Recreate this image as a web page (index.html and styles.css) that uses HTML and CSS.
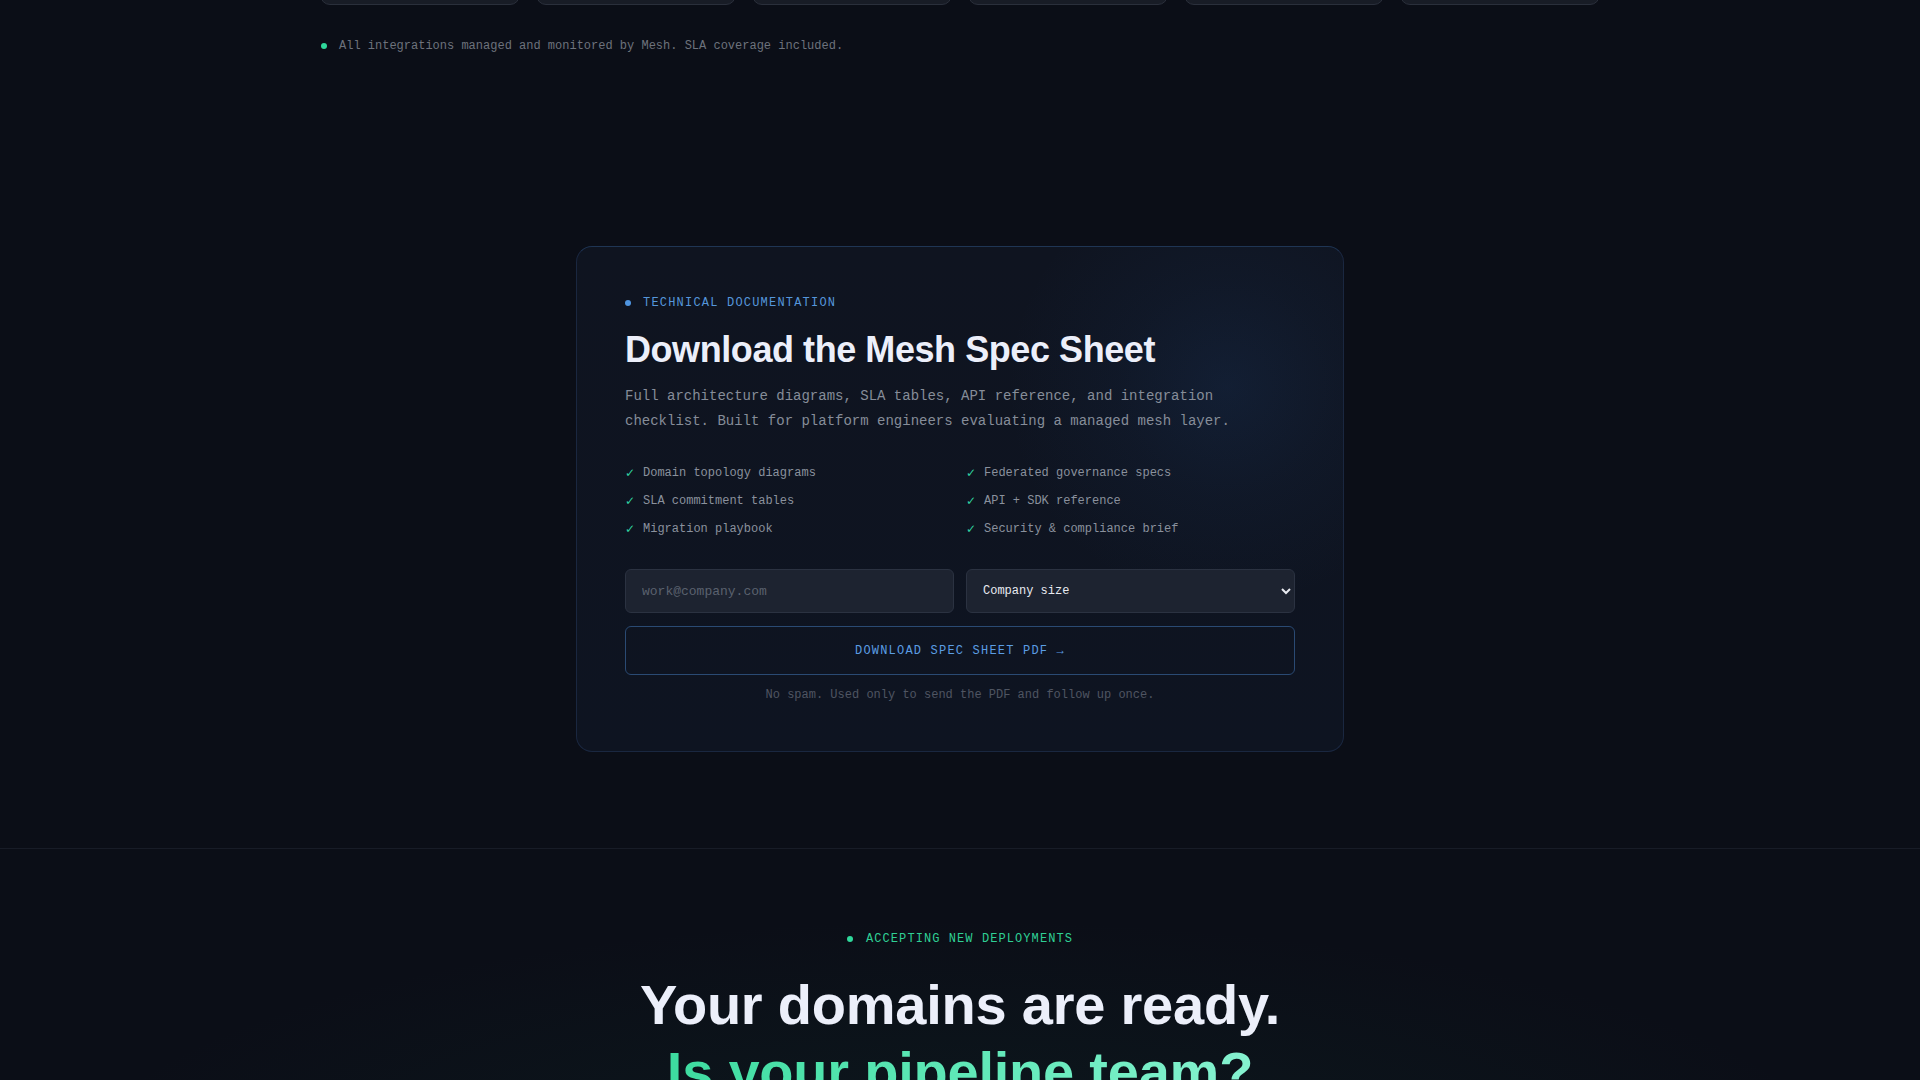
FILE: index.html
```html
<!DOCTYPE html>
<html lang="en">
<head>
<meta charset="utf-8">
<title>Mesh Spec Sheet</title>
<link rel="stylesheet" href="styles.css">
</head>
<body>
<div class="integrations">
  <div class="int-cards">
    <div class="int-card"></div>
    <div class="int-card"></div>
    <div class="int-card"></div>
    <div class="int-card"></div>
    <div class="int-card"></div>
    <div class="int-card"></div>
  </div>
  <p class="int-note"><span class="dot dot-green"></span>All integrations managed and monitored by Mesh. SLA coverage included.</p>
</div>

<section class="spec">
  <div class="spec-card">
    <div class="eyebrow eyebrow-blue"><span class="dot dot-blue"></span>TECHNICAL DOCUMENTATION</div>
    <h2 class="spec-title">Download the Mesh Spec Sheet</h2>
    <p class="spec-desc">Full architecture diagrams, SLA tables, API reference, and integration checklist. Built for platform engineers evaluating a managed mesh layer.</p>
    <ul class="checklist">
      <li><span class="check">✓</span>Domain topology diagrams</li>
      <li><span class="check">✓</span>Federated governance specs</li>
      <li><span class="check">✓</span>SLA commitment tables</li>
      <li><span class="check">✓</span>API + SDK reference</li>
      <li><span class="check">✓</span>Migration playbook</li>
      <li><span class="check">✓</span>Security &amp; compliance brief</li>
    </ul>
    <form class="spec-form">
      <div class="form-row">
        <input class="field" type="email" placeholder="work@company.com">
        <select class="field field-select">
          <option>Company size</option>
          <option>1–50</option>
          <option>51–200</option>
          <option>201–1000</option>
          <option>1000+</option>
        </select>
      </div>
      <button class="download-btn" type="button">DOWNLOAD SPEC SHEET PDF →</button>
      <p class="form-note">No spam. Used only to send the PDF and follow up once.</p>
    </form>
  </div>
</section>

<section class="cta">
  <div class="eyebrow eyebrow-green"><span class="dot dot-green"></span>ACCEPTING NEW DEPLOYMENTS</div>
  <h2 class="cta-title">Your domains are ready.<br><span class="grad">Is your pipeline team?</span></h2>
</section>
</body>
</html>
```

FILE: styles.css
```css
* { box-sizing: border-box; }

html, body {
  margin: 0;
  padding: 0;
  background: #0b0e17;
  color: #e5e7eb;
  font-family: "Liberation Mono", "DejaVu Sans Mono", monospace;
  overflow: hidden;
}

.dot {
  display: inline-block;
  width: 6px;
  height: 6px;
  border-radius: 50%;
  flex: none;
}
.dot-green { background: #2fd89b; }
.dot-blue { background: #4f95e0; }

/* integrations strip */
.integrations {
  width: 1280px;
  margin: 0 auto;
  padding-bottom: 95px;
}
.int-cards {
  display: grid;
  grid-template-columns: repeat(6, 1fr);
  gap: 16px;
  margin-top: -95px;
}
.int-card {
  height: 100px;
  background: #181c26;
  border: 1px solid #2a2f3b;
  border-radius: 10px;
}
.int-note {
  display: flex;
  align-items: center;
  gap: 12px;
  margin: 32px 0 0;
  padding-left: 1px;
  font-size: 12px;
  line-height: 18px;
  color: #6d727c;
}

/* spec sheet */
.spec {
  padding: 96px 0;
}
.spec-card {
  position: relative;
  width: 768px;
  margin: 0 auto;
  padding: 48px 48px 47px;
  border: 1px solid #1a2740;
  border-top-color: #1f3554;
  border-radius: 16px;
  background:
    radial-gradient(circle at 650px 140px, rgba(40, 90, 160, 0.15) 0, rgba(40, 90, 160, 0.06) 110px, rgba(40, 90, 160, 0) 220px),
    linear-gradient(180deg, #0f1420 0%, #0e1421 100%);
  overflow: hidden;
}
.eyebrow {
  display: flex;
  align-items: center;
  gap: 12px;
  font-size: 12px;
  letter-spacing: 0.1em;
}
.eyebrow-blue {
  color: #5596db;
  line-height: 12px;
  margin-top: 2px;
}
.spec-title {
  margin: 19px 0 0;
  font-family: "Liberation Sans", Arial, sans-serif;
  font-weight: 700;
  font-size: 36px;
  line-height: 43px;
  letter-spacing: -0.012em;
  color: #eceffa;
}
.spec-desc {
  margin: 13px 0 0;
  max-width: 620px;
  font-size: 14px;
  line-height: 24.5px;
  color: #868d99;
}
.checklist {
  list-style: none;
  margin: 30px 0 0;
  padding: 0;
  display: grid;
  grid-template-columns: 1fr 1fr;
  column-gap: 12px;
  row-gap: 8px;
}
.checklist li {
  display: flex;
  align-items: center;
  font-size: 12px;
  line-height: 20px;
  color: #8a919d;
}
.check {
  color: #2fd0a0;
  width: 18px;
  flex: none;
  font-family: "DejaVu Sans", sans-serif;
  font-size: 12px;
}

.spec-form {
  margin-top: 30px;
}
.form-row {
  display: grid;
  grid-template-columns: 1fr 1fr;
  gap: 12px;
}
.field {
  height: 44px;
  background: #1d2330;
  border: 1px solid #2b3241;
  border-radius: 6px;
  color: #e8eaf0;
  font-family: "Liberation Mono", "DejaVu Sans Mono", monospace;
  font-size: 13px;
  padding: 0 16px;
  outline: none;
  color-scheme: dark;
}
.field::placeholder { color: #5a616e; }
.field-select {
  font-size: 12px;
  padding: 0 10px 0 12px;
}
.download-btn {
  display: block;
  width: 100%;
  height: 49px;
  margin-top: 13px;
  background: transparent;
  border: 1px solid #2a4a73;
  border-radius: 6px;
  color: #5b9de3;
  font-family: "Liberation Mono", "DejaVu Sans Mono", monospace;
  font-size: 12px;
  letter-spacing: 0.1em;
  cursor: pointer;
}
.form-note {
  margin: 11px 0 0;
  text-align: center;
  font-size: 12px;
  line-height: 18px;
  color: #4f5562;
}

/* CTA */
.cta {
  border-top: 1px solid #181c27;
  padding-top: 81px;
  min-height: 400px;
  text-align: center;
  background: radial-gradient(ellipse 900px 260px at 50% 330px, rgba(20, 90, 70, 0.14), rgba(20, 90, 70, 0) 100%);
}
.eyebrow-green {
  justify-content: center;
  gap: 13px;
  color: #2fcf95;
  line-height: 18px;
  letter-spacing: 0.09em;
}
.cta-title {
  margin: 23px 0 0;
  font-family: "Liberation Sans", Arial, sans-serif;
  font-weight: 700;
  font-size: 56px;
  line-height: 1.2;
  letter-spacing: -0.004em;
  color: #eceffa;
}
.grad {
  background: linear-gradient(90deg, #3ddc9f 0%, #62e9b9 55%, #86f2d0 100%);
  -webkit-background-clip: text;
  background-clip: text;
  color: transparent;
}
```
